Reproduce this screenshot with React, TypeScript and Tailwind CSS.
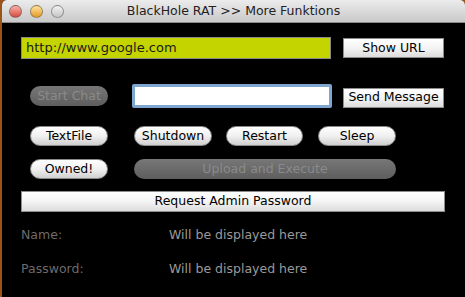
const font = { fontFamily: '"DejaVu Sans", "Liberation Sans", sans-serif' };

function Light({ color }: { color: string }) {
  return (
    <div
      className={`w-[13px] h-[13px] rounded-full border border-[#5a5a5a]/60 ${color}`}
    />
  );
}

function Pill({ label, className = '' }: { label: string; className?: string }) {
  return (
    <div
      className={`h-[20px] rounded-full border border-[#8a8a8a] bg-gradient-to-b from-white via-[#f0f0f0] to-[#d0d0d0] flex items-center justify-center text-[12.5px] text-black ${className}`}
    >
      {label}
    </div>
  );
}

function DisabledPill({ label, className = '' }: { label: string; className?: string }) {
  return (
    <div
      className={`h-[20px] rounded-full bg-gradient-to-b from-[#777] to-[#5e5e5e] flex items-center justify-center text-[12.5px] text-[#8a8a8a] ${className}`}
    >
      {label}
    </div>
  );
}

function SquareButton({ label, className = '' }: { label: string; className?: string }) {
  return (
    <div
      className={`h-[20px] border border-[#8c8c8c] bg-gradient-to-b from-white via-[#f4f4f4] to-[#dcdcdc] flex items-center justify-center text-[12.5px] text-black ${className}`}
    >
      {label}
    </div>
  );
}

export default function App() {
  return (
    <div className="w-[465px] h-[297px] bg-[#9a5418] pl-[2px] overflow-hidden" style={font}>
      <div className="h-full bg-black rounded-tl-[5px] rounded-tr-[5px] overflow-hidden flex flex-col">
        {/* Title bar */}
        <div className="h-[23px] shrink-0 bg-gradient-to-b from-[#ececec] to-[#c9c9c9] border-b border-[#8a8a8a] flex items-center relative">
          <div className="flex items-center gap-[8px] pl-[7px]">
            <Light color="bg-gradient-to-b from-[#f7b0a8] to-[#d6473d]" />
            <Light color="bg-gradient-to-b from-[#fde39a] to-[#e59a14]" />
            <Light color="bg-gradient-to-b from-[#f4f4f4] to-[#c4c4c4]" />
          </div>
          <div className="absolute inset-0 flex items-center justify-center text-[12.5px] text-[#222]">
            BlackHole RAT &gt;&gt; More Funktions
          </div>
        </div>

        {/* Body */}
        <div className="flex flex-col pl-[19px] pr-[20px]">
          <div className="flex items-center mt-[14px] gap-[12px]">
            <div className="w-[310px] h-[22px] bg-[#c4d400] border border-[#8a8a8a] flex items-center pl-[4px] text-[13px] text-[#1a1a1a]">
              http://www.google.com
            </div>
            <SquareButton label="Show URL" className="w-[101px]" />
          </div>

          <div className="flex items-center mt-[25px]">
            <DisabledPill label="Start Chat" className="w-[78px] ml-[9px]" />
            <div className="w-[200px] h-[24px] ml-[24px] bg-white border-[3px] border-[#7ea6cf] rounded-[2px]" />
            <SquareButton label="Send Message" className="w-[101px] ml-[11px] mt-[3px] h-[19px]" />
          </div>

          <div className="flex items-center mt-[18px] ml-[9px]">
            <Pill label="TextFile" className="w-[78px]" />
            <Pill label="Shutdown" className="w-[78px] ml-[26px]" />
            <Pill label="Restart" className="w-[77px] ml-[14px]" />
            <Pill label="Sleep" className="w-[78px] ml-[15px]" />
          </div>

          <div className="flex items-center mt-[13px] ml-[9px] gap-[26px]">
            <Pill label="Owned!" className="w-[78px]" />
            <DisabledPill label="Upload and Execute" className="w-[262px]" />
          </div>

          <SquareButton label="Request Admin Password" className="w-[424px] h-[21px] mt-[12px]" />

          <div className="flex items-center mt-[14px] text-[12.5px]">
            <div className="w-[148px] text-[#6e6a6a]">Name:</div>
            <div className="text-[#9a9a9a]">Will be displayed here</div>
          </div>
          <div className="flex items-center mt-[15px] text-[12.5px]">
            <div className="w-[148px] text-[#6e6a6a]">Password:</div>
            <div className="text-[#9a9a9a]">Will be displayed here</div>
          </div>
        </div>
      </div>
    </div>
  );
}
